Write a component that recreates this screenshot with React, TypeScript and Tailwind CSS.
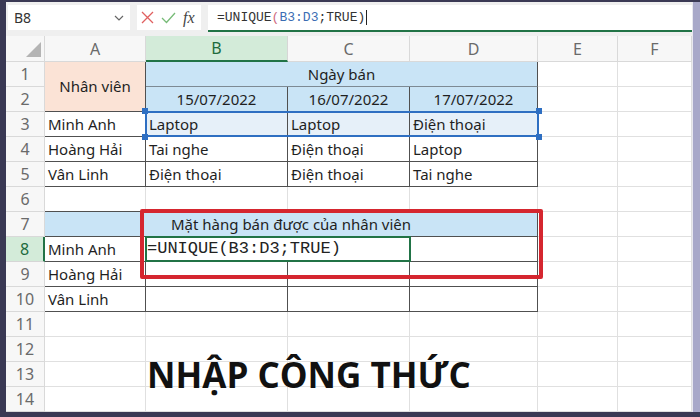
import React from "react";

type C = { text?: React.ReactNode; cls: string };

const gl = "border-r border-b border-[#e0e0e0] bg-white";
const tb = "border-r border-b border-[#505050] bg-white pl-[3px]";
const tbSel = "border-r border-b border-[#505050] bg-[#e6f0f9] pl-[3px]";
const rowSix = "border-r border-b border-r-[#e0e0e0] border-b-[#505050] bg-white";

function RowHead({ n, active }: { n: number; active?: boolean }) {
  return active ? (
    <div className="flex items-center justify-center border-b border-r-2 border-b-[#d6d6d6] border-r-[#217346] bg-[#d3ebd9] text-[16px] text-[#1e6b3e]">
      {n}
    </div>
  ) : (
    <div className="flex items-center justify-center border-r border-b border-[#d9d9d9] bg-[#f7f7f7] text-[16px] text-[#6a6a6a]">
      {n}
    </div>
  );
}

function Cell({ c }: { c: C }) {
  return <div className={"flex items-center overflow-hidden whitespace-nowrap " + c.cls}>{c.text}</div>;
}

const body: Record<number, string[]> = {
  3: ["Minh Anh", "Laptop", "Laptop", "Điện thoại"],
  4: ["Hoàng Hải", "Tai nghe", "Điện thoại", "Laptop"],
  5: ["Vân Linh", "Điện thoại", "Điện thoại", "Tai nghe"],
  8: ["Minh Anh", "", "", ""],
  9: ["Hoàng Hải", "", "", ""],
  10: ["Vân Linh", "", "", ""],
};

function Row({ n }: { n: number }) {
  let cells: C[] = [];
  if (n === 1) {
    cells = [
      { text: "Nhân viên", cls: "row-span-2 justify-center border-r border-b border-[#505050] bg-[#fbe3d6]" },
      { text: "Ngày bán", cls: "col-span-3 justify-center border-r border-b border-r-[#505050] border-b-[#7d8a94] bg-[#c9e4f6]" },
    ];
  } else if (n === 2) {
    cells = ["15/07/2022", "16/07/2022", "17/07/2022"].map((d) => ({
      text: d,
      cls: "justify-center border-r border-b border-[#505050] bg-[#c9e4f6]",
    }));
  } else if (n === 6) {
    cells = [0, 1, 2, 3].map(() => ({ cls: rowSix }));
  } else if (n === 7) {
    cells = [
      {
        text: "Mặt hàng bán được của nhân viên",
        cls: "col-span-4 justify-center border-r border-b border-[#505050] bg-[#c9e4f6]",
      },
    ];
  } else if (body[n]) {
    cells = body[n].map((t, i) => ({ text: t, cls: n === 3 && i > 0 ? tbSel : tb }));
  } else {
    cells = [0, 1, 2, 3].map(() => ({ cls: gl }));
  }
  return (
    <>
      <RowHead n={n} active={n === 8} />
      {cells.map((c, i) => (
        <Cell key={i} c={c} />
      ))}
      <div className={gl} />
      <div className={gl} />
    </>
  );
}

function ColHead({ l, active }: { l: string; active?: boolean }) {
  return active ? (
    <div className="flex items-center justify-center border-r border-b-2 border-r-[#d6d6d6] border-b-[#217346] bg-[#d3ebd9] text-[16px] text-[#1e6b3e]">
      {l}
    </div>
  ) : (
    <div className="flex items-center justify-center border-r border-b border-[#d9d9d9] bg-[#f7f7f7] text-[16px] text-[#6a6a6a]">
      {l}
    </div>
  );
}

function Handle({ cls }: { cls: string }) {
  return <div className={"absolute h-[6px] w-[6px] bg-[#2e6fc2] " + cls} />;
}

export default function App() {
  const rows = Array.from({ length: 14 }, (_, i) => i + 1);
  return (
    <div className="flex h-[417px] w-[700px] overflow-hidden bg-[#3a3954] pt-[2px] pb-[5px] pl-[6px] font-['Noto_Sans',sans-serif] text-[15px] text-[#1f1f1f]">
      <div className="flex w-[686px] flex-col">
        {/* formula bar */}
        <div className="flex h-[34px] items-start gap-[7px] bg-[#efefef] pt-[3px] pl-[2px]">
          <div className="flex h-[25px] w-[122px] items-center justify-between bg-white pr-[6px] pl-[6px] text-[14px] text-[#333]">
            <span>B8</span>
            <svg width="10" height="6" viewBox="0 0 10 6" fill="none" stroke="#666" strokeWidth="1.2">
              <path d="M1 1l4 4 4-4" />
            </svg>
          </div>
          <div className="flex h-[25px] w-[64px] items-center gap-[7px] bg-white pl-[4px]">
            <svg width="13" height="13" viewBox="0 0 13 13" stroke="#e06060" strokeWidth="1.3">
              <path d="M1 1l11 11M12 1L1 12" />
            </svg>
            <svg width="15" height="12" viewBox="0 0 15 12" fill="none" stroke="#77bb77" strokeWidth="1.3">
              <path d="M1 6l4.5 4.5L14 1" />
            </svg>
            <span className="font-['Liberation_Serif',serif] text-[16px] italic text-[#444]">fx</span>
          </div>
          <div className="flex h-[27px] flex-1 items-center border-b-2 border-[#217346] bg-white pl-[9px] font-['Liberation_Mono',monospace] text-[13px] text-[#333]">
            <span>=UNIQUE</span>
            <span className="text-[#d06b80]">(</span>
            <span className="text-[#3b6db3]">B3:D3</span>
            <span>;TRUE)</span>
            <span className="ml-[1px] h-[15px] w-px bg-[#222]" />
          </div>
        </div>
        {/* sheet */}
        <div className="relative grid grid-cols-[39px_101px_142px_122px_128px_80px_74px] grid-rows-[26px_repeat(14,25px)]">
          <div className="flex items-end justify-end border-r border-b border-[#d9d9d9] bg-[#f7f7f7] pr-[3px] pb-[4px]">
            <svg width="15" height="15" viewBox="0 0 15 15">
              <path d="M15 0V15H0z" fill="#b4b4b4" />
            </svg>
          </div>
          <ColHead l="A" />
          <ColHead l="B" active />
          <ColHead l="C" />
          <ColHead l="D" />
          <ColHead l="E" />
          <ColHead l="F" />
          {rows.map((n) => (
            <Row key={n} n={n} />
          ))}

          {/* referenced range B3:D3 */}
          <div className="absolute top-[75px] left-[139px] h-[26px] w-[394px] border-2 border-[#2e6fc2]" />
          <Handle cls="top-[72px] left-[136px]" />
          <Handle cls="top-[98px] left-[136px]" />
          <Handle cls="top-[72px] left-[530px]" />
          <Handle cls="top-[98px] left-[530px]" />

          {/* cell editor */}
          <div className="absolute top-[200px] left-[139px] flex h-[26px] w-[266px] items-center border-2 border-[#217346] bg-white font-['Liberation_Mono',monospace] text-[17px] text-[#222]">
            =UNIQUE(B3:D3;TRUE)
          </div>

          {/* red highlight */}
          <div className="absolute top-[173px] left-[134px] h-[70px] w-[403px] rounded-[2px] border-4 border-[#d5262f]" />

          <div className="absolute top-[321px] left-[141px] font-['Open_Sans',sans-serif] text-[35px] leading-none font-bold whitespace-nowrap text-[#111]">
            NHẬP CÔNG THỨC
          </div>
        </div>
      </div>
      <div className="w-[8px] border-l border-[#e8e8f0] bg-[#a8a8c9]" />
    </div>
  );
}
